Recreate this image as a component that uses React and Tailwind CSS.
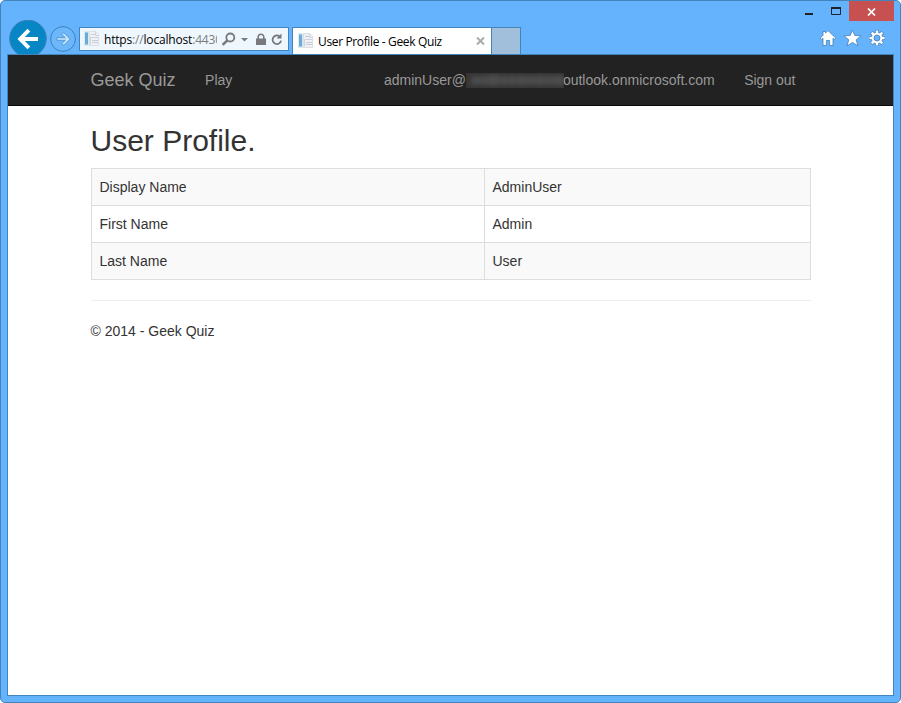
import React from 'react';

function PageIcon() {
  return (
    <svg width="16" height="16" viewBox="0 0 16 16" className="shrink-0">
      <rect x="0" y="0" width="5" height="15" fill="#d9eaf5" />
      <rect x="1" y="1.500" width="3" height="12" fill="#69acd8" />
      <path d="M5.500 .5h6l3 3v11h-9z" fill="#f0f1f4" stroke="#dcdfe3" />
      <path d="M7 3.500h4M8 9.500h6M8 11.500h6" stroke="#c6ccd8" />
      <path d="M11.500 .5v4h3M6.500 13.500v-7h8" fill="none" stroke="#cfd3da" />
    </svg>
  );
}

function NavButtons() {
  return (
    <svg width="79" height="34" viewBox="0 20 79 34" className="shrink-0">
      <circle cx="28" cy="38.500" r="18.300" fill="#0786c6" stroke="#3d7fb5" />
      <path d="M38 39H20.500M28.900 30.200L20.200 39l8.700 8.800" fill="none" stroke="#fff" strokeWidth="3.900" />
      <circle cx="63" cy="39" r="12.400" fill="#6cb6fb" stroke="#3f80bb" />
      <path d="M57 37.700h8.300l-3.600-3.600 1.100-1.100h1.400l6 6-6 6h-1.400l-1.100-1.100 3.600-3.600h-8.300z" fill="#c3e4fe" stroke="#4286c0" strokeWidth=".7" />
    </svg>
  );
}

function TitleBar() {
  return (
    <div className="flex h-5 items-start justify-end pr-[6px]">
      <svg width="44" height="20" viewBox="805 1 44 20">
        <path d="M805 13h8v2h-8z" fill="#1f2328" />
        <path d="M831.500 8h9v6.500h-9z" fill="none" stroke="#1f2328" />
        <path d="M831 7h10v2h-10z" fill="#1f2328" />
      </svg>
      <div className="flex h-5 w-[45px] items-center justify-center bg-[#c75050]">
        <svg width="9" height="8" viewBox="0 0 9 8" className="mt-[2px]">
          <path d="M1 .5l7 7M8 .5l-7 7" stroke="#fff" strokeWidth="1.700" />
        </svg>
      </div>
    </div>
  );
}

function AddressBar() {
  return (
    <div className="mt-[7px] flex h-6 w-[210px] shrink-0 items-center border border-[#4484bc] bg-[#eff7fe] pl-[4px]">
      <PageIcon />
      <div className="ml-1 mt-px w-[113px] shrink-0 overflow-hidden whitespace-nowrap font-['Open_Sans','Noto_Sans',sans-serif] text-[12px] leading-[22px] tracking-[-0.18px] text-[#7a7d80]">
        <span className="text-black">https</span>://<span className="text-black">localhost</span>:4430
      </div>
      <svg width="66" height="22" viewBox="217 28 66 22" className="shrink-0">
        <circle cx="230.300" cy="37.500" r="4" fill="none" stroke="#77797c" strokeWidth="1.800" />
        <path d="M227.300 40.500l-4.700 4.300" stroke="#77797c" strokeWidth="2.400" />
        <path d="M241 38h7l-3.500 3.500z" fill="#77797c" />
        <path d="M256 38.500h10v6.500h-10z" fill="#77797c" />
        <path d="M258.200 39v-2a2.800 2.800 0 0 1 5.600 0v2" fill="none" stroke="#77797c" strokeWidth="1.600" />
        <path d="M279.800 36.600a4.300 4.300 0 1 0 1.300 4" fill="none" stroke="#77797c" strokeWidth="1.800" />
        <path d="M281.500 33.500v5h-5z" fill="#77797c" />
      </svg>
    </div>
  );
}

function Tabs() {
  return (
    <div className="ml-[3px] mt-[7px] flex h-[27px]">
      <div className="flex w-[200px] items-center border border-b-0 border-[#4484bc] bg-white pl-[5px] pr-[6px]">
        <PageIcon />
        <span className="ml-1 mt-px whitespace-nowrap font-['Open_Sans','Noto_Sans',sans-serif] text-[12px] leading-none tracking-[-0.36px] text-black">
          User Profile - Geek Quiz
        </span>
        <svg width="9" height="8" viewBox="0 0 9 8" className="ml-auto">
          <path d="M1 .5l7 7M8 .5l-7 7" stroke="#aaa" strokeWidth="2" />
        </svg>
      </div>
      <div className="w-[29px] border border-b-0 border-l-0 border-[#4484bc] bg-[#a1bfdb]" />
    </div>
  );
}

function Tools() {
  return (
    <svg width="68" height="24" viewBox="819 26 68 24" className="ml-auto mr-[13px] mt-[6px] shrink-0">
      <g fill="#fff" stroke="#427fb4" strokeWidth=".8">
        <path d="M828 30.600l7.700 7.400-1.400 1.500-1.300-1.200V45.500h-3.400v-5h-3.200v5H823v-7.200l-1.300 1.200-1.400-1.500 2.700-2.700V31.500h2.500v1.600z" />
        <path d="M852.500 30l2.300 5.500 6.300.3-4.900 4 1.800 6.100-5.500-3.500-5.500 3.500 1.800-6.100-4.900-4 6.300-.3z" />
      </g>
      <g transform="translate(877 38)">
        <g stroke="#427fb4" strokeWidth="3.800">
          <path d="M0-8V8M-8 0H8M-5.600-5.600L5.600 5.600M5.600-5.600L-5.600 5.600" />
        </g>
        <circle r="5.800" fill="#427fb4" />
        <path d="M0-7.600V7.600M-7.600 0H7.600M-5.300-5.300L5.300 5.300M5.300-5.300L-5.300 5.300" stroke="#fff" strokeWidth="2.500" />
        <circle r="5.300" fill="#fff" />
        <circle r="3" fill="#64b1fb" stroke="#427fb4" strokeWidth=".8" />
      </g>
    </svg>
  );
}

function RedactedName() {
  return (
    <span className="flex h-[15px] w-[98px] shrink-0 overflow-hidden bg-[#343434]">
      <svg width="98" height="15" className="blur-[2px]">
        <path d="M4 7.500h94" stroke="#484848" strokeWidth="9" />
        <path d="M11 4v8M19 3v9M25 1v12M30 1v12M38 3v9M46 3v9M55 2v11M61 3v9M67 3v9M74 2v11M81 3v9M88 3v9M94 2v11" stroke="#555" strokeWidth="2" />
      </svg>
    </span>
  );
}

const rows = [
  ['Display Name', 'AdminUser'],
  ['First Name', 'Admin'],
  ['Last Name', 'User'],
];

export default function App() {
  return (
    <div className="h-[703px] w-[901px] overflow-hidden bg-white font-['Liberation_Sans',Arial,sans-serif] text-sm text-[#333]">
      <div className="flex h-full flex-col rounded-[5px] border border-[#4484bc] bg-[#65b2fd] pb-[6px]">
        <TitleBar />
        <div className="-mt-px flex h-[34px] shrink-0">
          <div className="-ml-px flex"><NavButtons /></div>
          <AddressBar />
          <Tabs />
          <Tools />
        </div>
        <div className="mx-[6px] flex grow flex-col border border-[#4484bc] bg-white">
          <header className="flex h-[51px] shrink-0 items-center border-b border-[#080808] bg-[#222] pl-[82.5px] pr-[97.500px] text-[#999]">
            <span className="text-[18px] leading-5">Geek Quiz</span>
            <span className="ml-[29.500px]">Play</span>
            <span className="ml-auto flex items-center whitespace-nowrap">
              <span>adminUser@</span>
              <RedactedName />
              <span className="-ml-px">outlook.onmicrosoft.com</span>
            </span>
            <span className="ml-[29.500px]">Sign out</span>
          </header>
          <main className="w-[803px] pl-[83px]">
            <h2 className="-ml-[0.5px] mt-[18px] text-[30px] leading-[33px]">User Profile.</h2>
            <table className="mt-[11px] w-full table-fixed border-collapse">
              <colgroup><col className="w-[393px]" /><col /></colgroup>
              <tbody>
                {rows.map(([label, value]) => (
                  <tr key={label} className="h-[37px] odd:bg-[#f9f9f9]">
                    <td className="border border-[#ddd] px-[7.500px] leading-5">{label}</td>
                    <td className="border border-[#ddd] px-[7.500px] leading-5">{value}</td>
                  </tr>
                ))}
              </tbody>
            </table>
            <hr className="my-5 border-[#eee]" />
            <footer><p className="-ml-[0.5px] leading-5">© 2014 - Geek Quiz</p></footer>
          </main>
        </div>
      </div>
    </div>
  );
}
